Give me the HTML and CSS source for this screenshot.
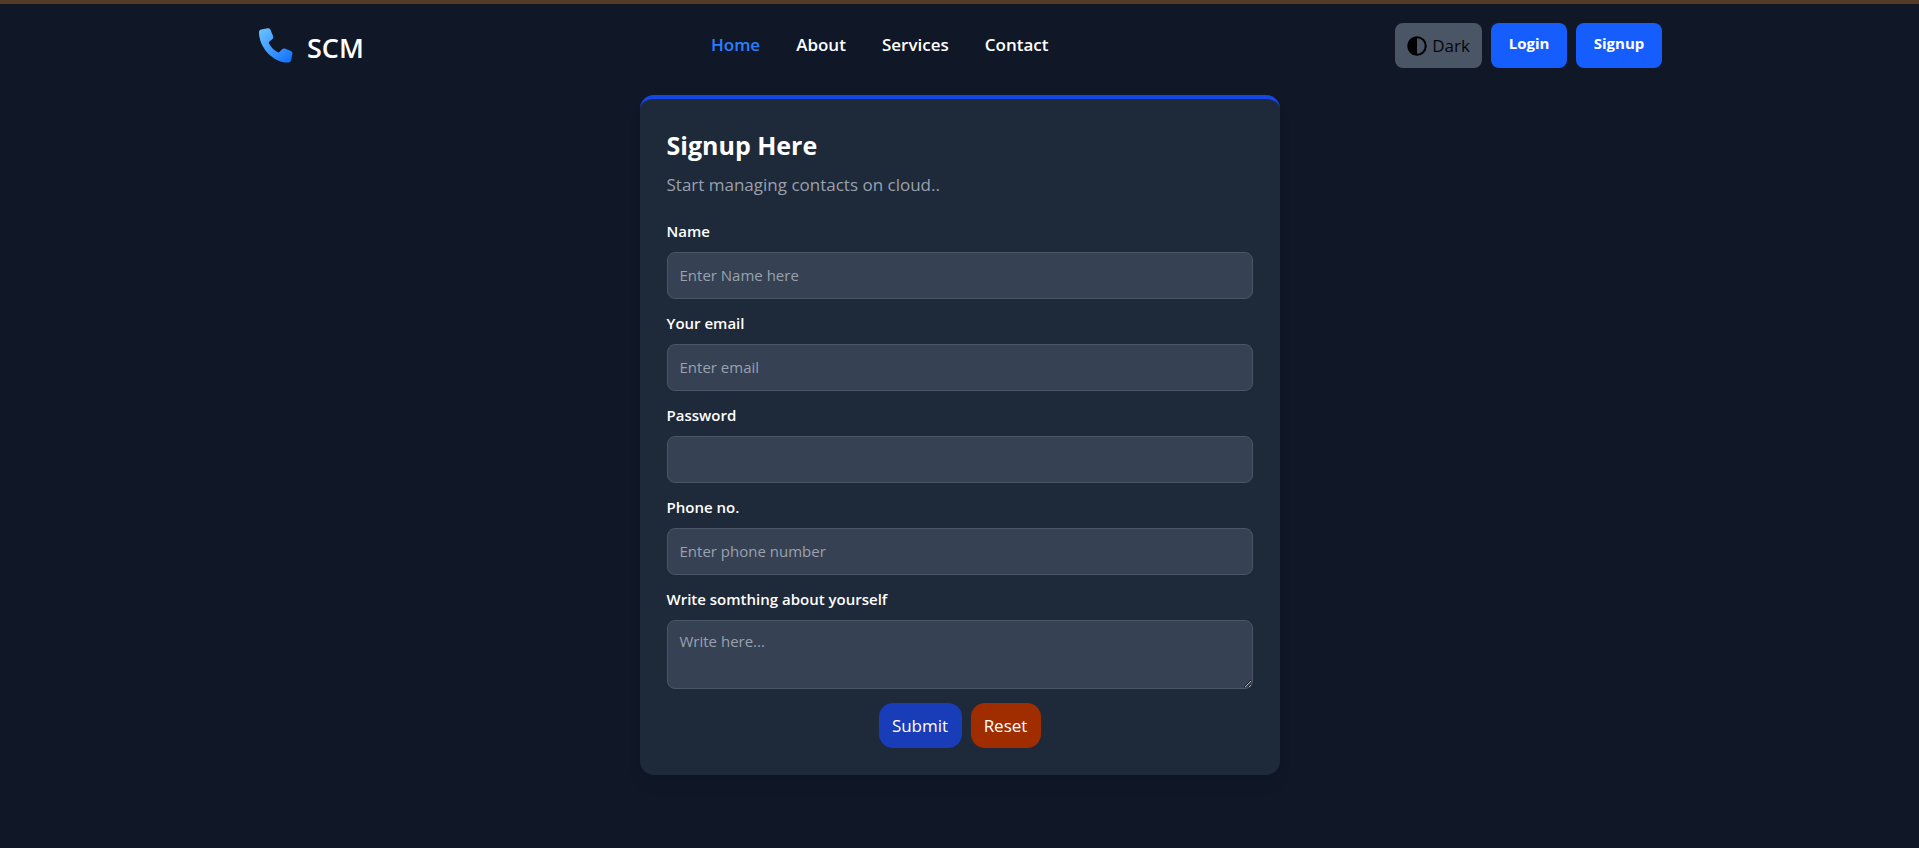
FILE: index.html
```html
<!DOCTYPE html>
<html lang="en">
<head>
<meta charset="utf-8">
<title>SCM - Signup</title>
<link rel="stylesheet" href="styles.css">
</head>
<body>
<div class="topline"></div>
<nav class="navbar">
  <a class="brand" href="#">
    <svg class="brand-icon" viewBox="0 0 36 36" aria-hidden="true">
      <defs>
        <linearGradient id="ph" x1="0" y1="0" x2="1" y2="1">
          <stop offset="0" stop-color="#6cc4ff"/>
          <stop offset="1" stop-color="#0f6fff"/>
        </linearGradient>
      </defs>
      <path fill="url(#ph)" d="M3.2 1.6 9.6.3c1.3-.3 2.4.3 2.9 1.5l2.6 6.5c.4 1 .2 2-.6 2.7l-3.3 2.8c-.5.4-.6 1-.3 1.5 1.9 3.7 5 7 9 9 .5.3 1.1.2 1.5-.2l2.7-2.9c.8-.8 1.8-1 2.8-.6l5.9 2.4c1.2.5 1.9 1.6 1.6 2.9l-1.4 6.7c-.3 1.3-1.3 2-2.6 2C15.300 34.900 1 19.500 1 4.200c0-1.300.9-2.300 2.200-2.600Z"/>
    </svg>
    <span>SCM</span>
  </a>
  <ul class="links">
    <li><a class="active" href="#">Home</a></li>
    <li><a href="#">About</a></li>
    <li><a href="#">Services</a></li>
    <li><a href="#">Contact</a></li>
  </ul>
  <div class="actions">
    <button class="btn-theme" type="button">
      <svg class="theme-icon" viewBox="0 0 16 16" aria-hidden="true">
        <circle cx="8" cy="8" r="7" fill="none" stroke="#000" stroke-width="1.600"/>
        <path d="M8 1a7 7 0 0 0 0 14Z" fill="#000"/>
      </svg>
      <span>Dark</span>
    </button>
    <a class="btn-nav login" href="#">Login</a>
    <a class="btn-nav signup" href="#">Signup</a>
  </div>
</nav>
<main class="main">
  <form class="card">
    <h1>Signup Here</h1>
    <p class="sub">Start managing contacts on cloud..</p>
    <div class="field">
      <label for="name">Name</label>
      <input id="name" type="text" placeholder="Enter Name here">
    </div>
    <div class="field">
      <label for="email">Your email</label>
      <input id="email" type="email" placeholder="Enter email">
    </div>
    <div class="field">
      <label for="pass">Password</label>
      <input id="pass" type="password">
    </div>
    <div class="field">
      <label for="phone">Phone no.</label>
      <input id="phone" type="text" placeholder="Enter phone number">
    </div>
    <div class="field">
      <label for="about">Write somthing about yourself</label>
      <textarea id="about" placeholder="Write here..."></textarea>
    </div>
    <div class="form-actions">
      <button class="btn submit" type="button">Submit</button>
      <button class="btn reset" type="button">Reset</button>
    </div>
  </form>
</main>
</body>
</html>
```
FILE: styles.css
```css
* { box-sizing: border-box; }
html, body { margin: 0; padding: 0; }
body {
  min-height: 848px;
  background: #101828;
  color: #fff;
  font-family: "Open Sans", "Noto Sans", sans-serif;
  overflow: hidden;
}
.topline { height: 4px; background: #553b28; }
.navbar {
  height: 91px;
  width: 1440px;
  margin-left: 240px;
  padding: 19px 18px 0 18px;
  display: grid;
  grid-template-columns: 453px 1fr auto;
  align-items: start;
}
.brand {
  display: flex;
  align-items: center;
  gap: 13px;
  color: #fff;
  text-decoration: none;
  font-size: 27px;
  font-weight: 600;
  height: 49px;
}
.brand-icon { width: 36px; height: 36px; margin-bottom: 3px; }
.links {
  list-style: none;
  margin: 0;
  padding: 10px 0 0;
  display: flex;
  gap: 36px;
}
.links a {
  color: #fff;
  text-decoration: none;
  font-weight: 600;
  font-size: 17px;
  line-height: 24px;
}
.links a.active { color: #2b7fff; }
.actions { display: flex; gap: 9px; }
.btn-theme {
  height: 45px;
  width: 87px;
  display: flex;
  align-items: center;
  justify-content: center;
  gap: 5px;
  background: #4a5565;
  color: #05070b;
  border: 0;
  border-radius: 8px;
  font: 400 17px "Open Sans", sans-serif;
}
.theme-icon { width: 20px; height: 20px; }
.btn-nav {
  height: 45px;
  display: flex;
  align-items: center;
  justify-content: center;
  padding-bottom: 6px;
  background: #155dfc;
  color: #fff;
  border-radius: 8px;
  text-decoration: none;
  font-weight: 700;
  font-size: 15px;
}
.login { width: 76px; }
.signup { width: 86px; }
.main { display: flex; justify-content: center; }
.card {
  width: 640px;
  height: 680px;
  background: #1e2939;
  border-top: 4px solid #1447e6;
  border-radius: 14px;
  padding: 28px 27px 0;
  box-shadow: 0 10px 15px -3px rgba(0, 0, 0, .1), 0 4px 6px -4px rgba(0, 0, 0, .1);
}
h1 {
  margin: 0;
  font-size: 25px;
  line-height: 36px;
  font-weight: 700;
}
.sub {
  margin: 10px 0 0;
  color: #99a1af;
  font-size: 17px;
  line-height: 24px;
}
.field { margin-top: 14px; }
.sub + .field { margin-top: 24px; }
label {
  display: block;
  font-size: 15px;
  font-weight: 600;
  line-height: 20px;
  margin-bottom: 11px;
}
input, textarea {
  display: block;
  width: 100%;
  background: #364153;
  border: 1px solid #4a5565;
  border-radius: 8px;
  color: #fff;
  font-family: "Open Sans", sans-serif;
  font-size: 15px;
  padding: 0 12px;
  outline: none;
}
input { height: 47px; padding-bottom: 2px; }
textarea { height: 69px; padding-top: 10px; line-height: 20px; color-scheme: dark; }
::placeholder { color: #99a1af; opacity: 1; }
.form-actions {
  display: flex;
  justify-content: center;
  gap: 9px;
  margin-top: 14px;
}
.btn {
  height: 45px;
  border: 0;
  border-radius: 14px;
  color: #fff;
  font: 400 17px "Open Sans", sans-serif;
}
.submit { width: 83px; background: #193cb8; }
.reset { width: 70px; background: #9f2d00; }
```
